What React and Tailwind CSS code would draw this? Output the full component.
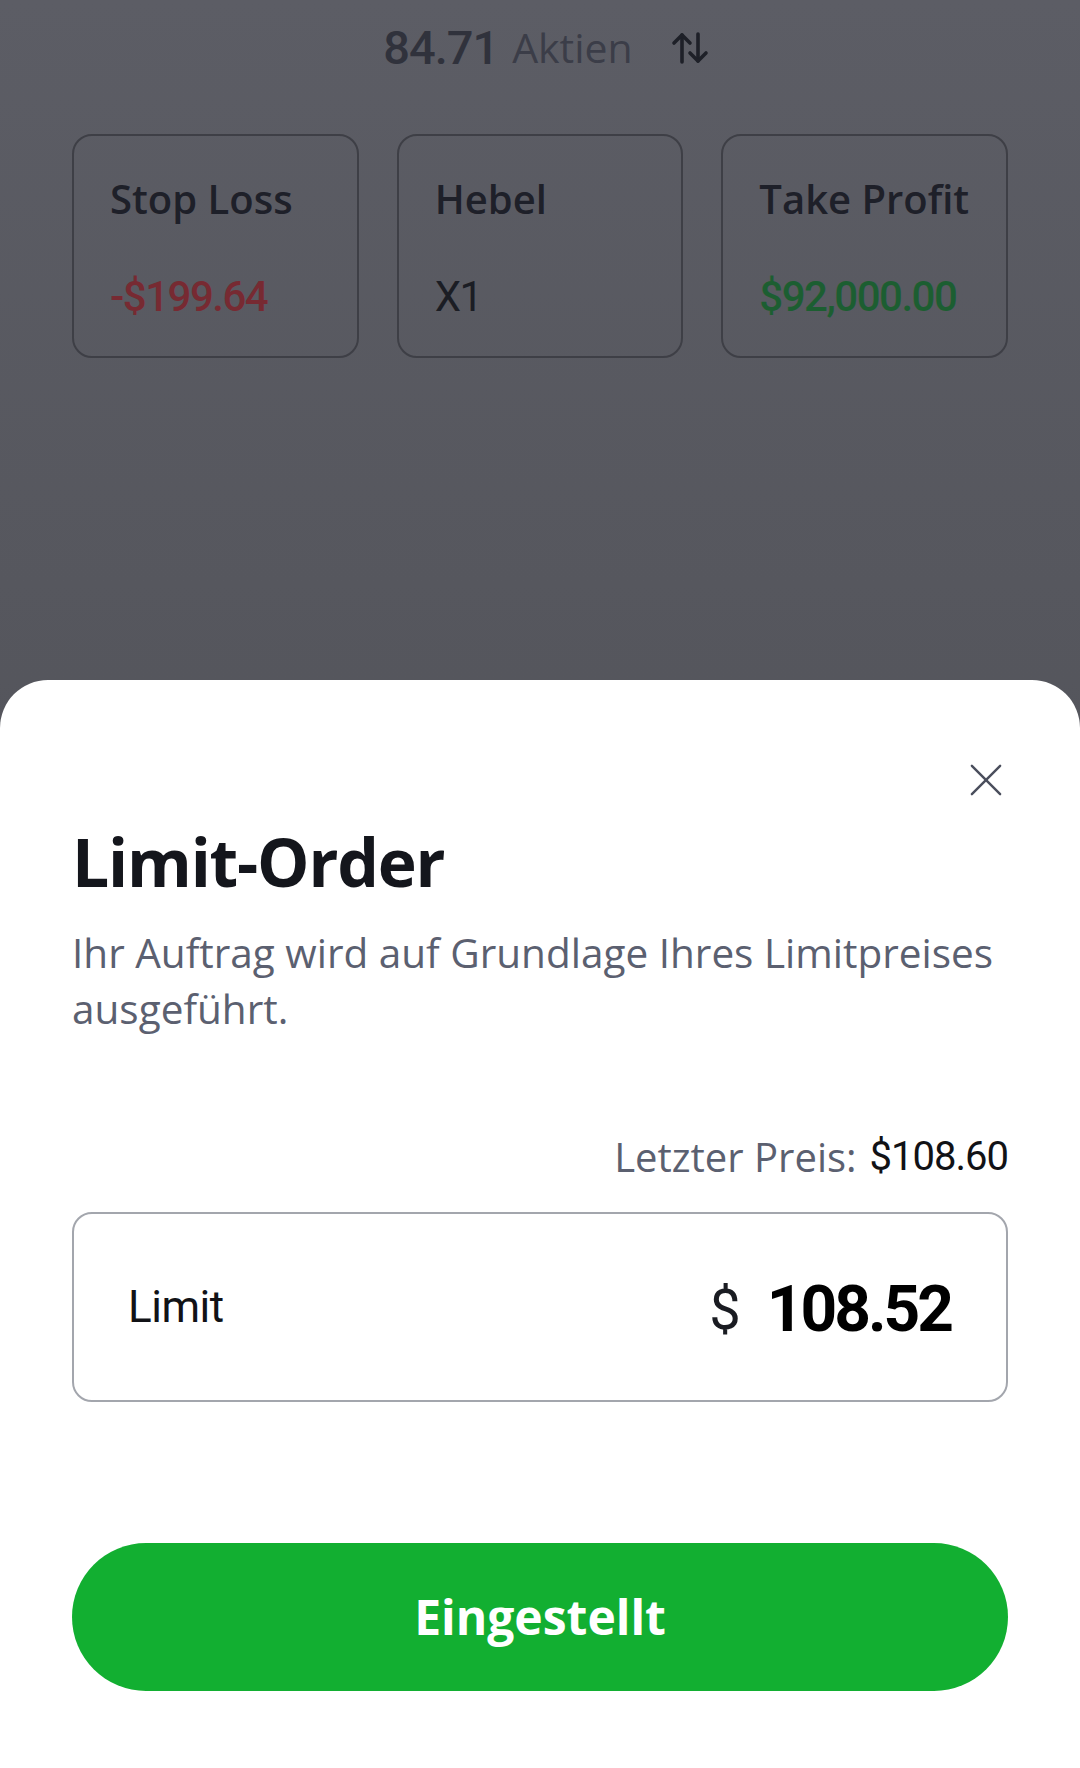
import React from 'react';

const SANS = { fontFamily: '"Open Sans", "Noto Sans", sans-serif' };
const NUM = { fontFamily: 'Roboto, "Liberation Sans", sans-serif' };

const cards = [
  { label: 'Stop Loss', value: '-$199.64', tone: 'text-[#772a32] font-medium' },
  { label: 'Hebel', value: 'X1', tone: 'text-[#1b1d24] font-normal' },
  { label: 'Take Profit', value: '$92,000.00', tone: 'text-[#1c5e31] font-medium' },
];

// Up arrow left, down arrow right, drawn tight together
const SwapIcon = () => (
  <svg width="38" height="32" viewBox="0 0 38 32" fill="none" stroke="#1e2028" strokeWidth="3.6" strokeLinecap="round" strokeLinejoin="round">
    <path d="M11 30V3" />
    <path d="M3 11l8-8 8 8" />
    <path d="M27 2v27" />
    <path d="M19 21l8 8 8-8" />
  </svg>
);

const CloseIcon = () => (
  <svg width="34" height="34" viewBox="0 0 34 34" fill="none" stroke="#4a4e5c" strokeWidth="2.6" strokeLinecap="round">
    <path d="M2 2l30 30" />
    <path d="M32 2L2 32" />
  </svg>
);

const App = () => {
  return (
    <div className="w-[1080px] h-[1768px] flex flex-col overflow-hidden bg-gradient-to-b from-[#5c5d65] to-[#4a4b50]" style={SANS}>
      {/* Dimmed page behind the sheet */}
      <div className="h-[680px] flex flex-col px-[72px]">
        <div className="h-[96px] flex items-center justify-center pl-[12px]">
          <span className="text-[47px] font-medium text-[#30323c] tracking-[-1px]" style={NUM}>84.71</span>
          <span className="ml-[14px] text-[41px] text-[#3b3d48]">Aktien</span>
          <span className="ml-[38px] flex items-center"><SwapIcon /></span>
        </div>

        <div className="mt-[38px] grid grid-cols-3 gap-[38px]">
          {cards.map((c) => (
            <div key={c.label} className="h-[224px] rounded-[20px] border-2 border-[#3e3f46] pl-[36px] pt-[35px]">
              <div className="text-[40px] leading-[56px] font-semibold text-[#1e2029]">{c.label}</div>
              <div className={`mt-[42px] text-[42px] leading-[56px] tracking-[-1.5px] ${c.tone}`} style={NUM}>{c.value}</div>
            </div>
          ))}
        </div>
      </div>

      {/* Bottom sheet */}
      <div className="flex-1 bg-white rounded-t-[48px] px-[72px] pt-[84px]">
        <div className="flex justify-end pr-[6px]">
          <button className="w-[32px] h-[32px] flex items-center justify-center"><CloseIcon /></button>
        </div>

        <h1 className="mt-[25px] text-[66px] leading-[80px] font-bold text-[#14161c] tracking-[-1.2px]">Limit-Order</h1>
        <p className="mt-[24px] text-[40.5px] leading-[56px] text-[#5b6070]">
          Ihr Auftrag wird auf Grundlage Ihres Limitpreises ausgeführt.
        </p>

        <div className="mt-[92px] flex justify-end items-center text-[40px] leading-[56px]">
          <span className="text-[#5b6070]">Letzter Preis:</span>
          <span className="ml-[13px] text-[#111216] tracking-[-1px]" style={NUM}>$108.60</span>
        </div>

        <div className="mt-[27px] h-[190px] rounded-[20px] border-2 border-[#a3a6ad] flex items-center justify-between pl-[54px] pr-[55px]">
          <span className="text-[44px] text-[#111216] tracking-[-0.5px]" style={NUM}>Limit</span>
          <div className="flex items-center pt-[6px]" style={NUM}>
            <span className="text-[56px] text-[#1a1c22]">$</span>
            <span className="ml-[26px] text-[64px] font-bold text-black tracking-[-3px]">108.52</span>
          </div>
        </div>

        <button className="mt-[141px] w-full h-[148px] rounded-full bg-[#12af31] text-white text-[48px] font-bold flex items-center justify-center">
          Eingestellt
        </button>
      </div>
    </div>
  );
};

export default App;
